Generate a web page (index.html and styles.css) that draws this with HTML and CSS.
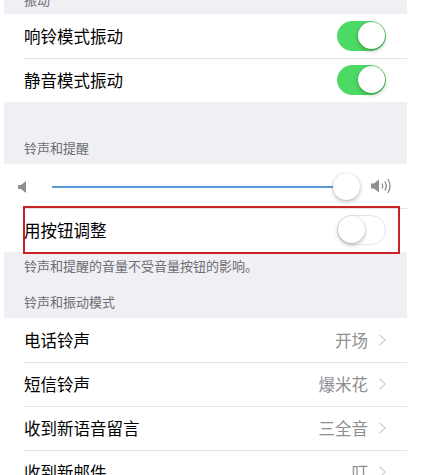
FILE: index.html
```html
<!DOCTYPE html>
<html lang="zh">
<head>
<meta charset="utf-8">
<link rel="stylesheet" href="styles.css">
</head>
<body>
<div class="screen">
  <div class="sec-top"><span>振动</span></div>
  <div class="group">
    <div class="row"><span class="label">响铃模式振动</span><span class="switch on"><span class="knob"></span></span></div>
    <div class="row"><span class="label">静音模式振动</span><span class="switch on"><span class="knob"></span></span></div>
  </div>
  <div class="sec-head tall"><span>铃声和提醒</span></div>
  <div class="group">
    <div class="row slider-row">
      <svg class="spk-small" width="10" height="12" viewBox="0 0 10 12"><path d="M0 4h3l5-4v12l-5-4H0z" fill="#8e8e93"/></svg>
      <div class="track"><span class="fill"></span><span class="thumb"></span></div>
      <svg class="spk-big" width="22" height="18" viewBox="0 0 22 18"><path d="M0 6.5h3l5-4v13l-5-4H0z" fill="#8e8e93"/><path d="M11 6.5q1.6 2.5 0 5" stroke="#8e8e93" stroke-width="1.3" fill="none"/><path d="M13.8 4.5q3 4.5 0 9" stroke="#8e8e93" stroke-width="1.3" fill="none"/><path d="M16.8 2q4.5 7 0 14" stroke="#8e8e93" stroke-width="1.3" fill="none"/></svg>
    </div>
    <div class="row hl-row"><span class="label">用按钮调整</span><span class="switch"><span class="knob"></span></span><span class="highlight"></span></div>
  </div>
  <div class="sec-foot"><span>铃声和提醒的音量不受音量按钮的影响。</span></div>
  <div class="sec-head"><span>铃声和振动模式</span></div>
  <div class="group">
    <div class="row"><span class="label">电话铃声</span><span class="value">开场</span><span class="chev"></span></div>
    <div class="row"><span class="label">短信铃声</span><span class="value">爆米花</span><span class="chev"></span></div>
    <div class="row"><span class="label">收到新语音留言</span><span class="value">三全音</span><span class="chev"></span></div>
    <div class="row"><span class="label">收到新邮件</span><span class="value">叮</span><span class="chev"></span></div>
  </div>
</div>
</body>
</html>
```
FILE: styles.css
```css
html, body {
  margin: 0;
  padding: 0;
  background: #fff;
  height: 475px;
  overflow: hidden;
}
body {
  font-family: "Noto Sans CJK SC", "Noto Sans", sans-serif;
  color: #000;
}
.screen {
  width: 403px;
  margin-left: 4px;
  background: #efeff4;
  min-height: 475px;
}
.sec-top {
  height: 14px;
  overflow: hidden;
  padding-left: 20px;
  font-size: 13px;
  color: #6d6d72;
}
.sec-top span {
  display: block;
  line-height: 16px;
  margin-top: -8px;
}
.group {
  background: #fff;
}
.row {
  position: relative;
  height: 44px;
  display: flex;
  align-items: center;
  padding: 0 20px;
  box-sizing: border-box;
}
.row + .row::before {
  content: "";
  position: absolute;
  left: 20px;
  right: 0;
  top: 0;
  height: 1px;
  background: #e3e3e8;
}
.label {
  font-size: 16.5px;
  flex: 1;
  line-height: 20px;
}
.value {
  font-size: 16.5px;
  color: #8e8e93;
  margin-right: 8px;
}
.chev {
  width: 7px;
  height: 7px;
  border-right: 1.5px solid #c7c7cc;
  border-top: 1.5px solid #c7c7cc;
  transform: rotate(45deg);
  margin-right: 3px;
}
.switch {
  position: relative;
  width: 49px;
  height: 30px;
  border-radius: 15px;
  box-sizing: border-box;
  border: 1.5px solid #e5e5ea;
  background: #fff;
  margin-right: 1px;
}
.switch.on {
  background: #4cd964;
  border-color: #4cd964;
}
.knob {
  position: absolute;
  top: 0;
  left: 0;
  width: 27px;
  height: 27px;
  border-radius: 50%;
  background: #fff;
  box-shadow: 0 2px 4px rgba(0,0,0,0.25), 0 0 0 0.5px rgba(0,0,0,0.08);
}
.switch.on .knob {
  left: auto;
  right: 0;
}
.sec-head {
  height: 44px;
  display: flex;
  align-items: flex-end;
  padding: 0 20px 7px;
  box-sizing: border-box;
  font-size: 13px;
  color: #6d6d72;
  line-height: 18px;
}
.sec-head.tall {
  height: 62px;
  padding-bottom: 7px;
}
.sec-foot {
  padding: 5px 20px 0;
  height: 22px;
  box-sizing: border-box;
  font-size: 13px;
  color: #6d6d72;
  line-height: 18px;
}
.slider-row {
  padding: 0 14px 0 14px;
}
.spk-small {
  margin-top: 1px;
}
.track {
  position: relative;
  flex: 1;
  height: 2px;
  margin: 1px 22px 0 24px;
  background: #b6b6b6;
}
.fill {
  position: absolute;
  left: 0;
  top: 0;
  height: 2px;
  width: 100%;
  background: #5b9ad6;
}
.thumb {
  position: absolute;
  right: -13px;
  top: -13px;
  width: 27px;
  height: 27px;
  border-radius: 50%;
  background: #fff;
  box-shadow: 0 2px 4px rgba(0,0,0,0.25), 0 0 0 0.5px rgba(0,0,0,0.08);
}
.spk-big {
  margin-left: 2px;
}
.highlight {
  position: absolute;
  left: 19px;
  top: -2px;
  width: 377px;
  height: 48px;
  box-sizing: border-box;
  border: 2px solid #cc2027;
  pointer-events: none;
}
```
